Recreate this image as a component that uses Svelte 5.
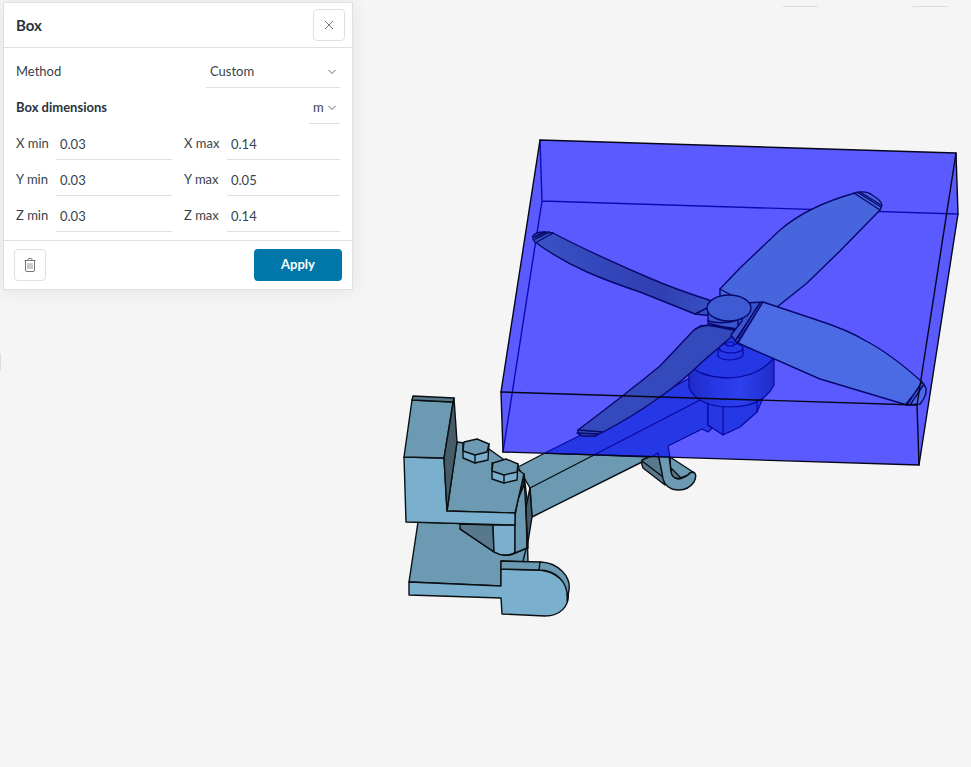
<script lang="ts">
  let method = $state('Custom');
  let unit = $state('m');

  let bounds = $state([
    { axis: 'X', min: '0.03', max: '0.14' },
    { axis: 'Y', min: '0.03', max: '0.05' },
    { axis: 'Z', min: '0.03', max: '0.14' }
  ]);
</script>

{#snippet chevron()}
  <svg class="chevron" viewBox="0 0 8 6" aria-hidden="true">
    <path d="M0.5 1 L4 4.5 L7.5 1" />
  </svg>
{/snippet}

<main class="workspace">
  <svg class="scene" viewBox="0 0 971 767" role="img" aria-label="Propeller model with box selection">
    <defs>
      <linearGradient id="blade-nw" x1="0" y1="0" x2="1" y2="0">
        <stop offset="0" stop-color="#3b52c4" />
        <stop offset="0.3" stop-color="#3449bc" />
        <stop offset="0.7" stop-color="#303fb2" />
        <stop offset="1" stop-color="#3850c4" />
      </linearGradient>
      <linearGradient id="motor" x1="0" y1="0" x2="1" y2="0">
        <stop offset="0" stop-color="#202cc8" />
        <stop offset="0.3" stop-color="#2637e4" />
        <stop offset="0.6" stop-color="#2d40ee" />
        <stop offset="1" stop-color="#1f2cc8" />
      </linearGradient>
    </defs>

    <!-- toolbar and side panel edges -->
    <path class="edge-mark" d="M783 6.5 H818 M913 6.5 H948 M0.5 354 V370" />

    <!-- arm, outside the box -->
    <g class="solid">
      <path class="mid" d="M518 467 L545 453 L652 457 L532 517 L530 488 Z" />
      <path class="line" d="M530 488 L592 456" />
      <path class="shade" d="M642 460 L658 453 L665 485 L643 468 Q641 464 642 460 Z" />
      <path class="line" d="M642 461 L663 477" />
      <path class="mid" d="M670 457 L693 472 L688 475 L678 479 L671 474 Z" />
      <path class="shade" d="M671 468 L681 478 Q673 480 671 473 Z" />
      <path class="mid" d="M658 453 L662 473 Q663 486 672 489 Q686 493 694 482 Q698 474 693 472 Q690 472 688 475 Q683 479 678 479 Q672 478 671 472 L669 456 Z" />
    </g>

    <!-- box volume -->
    <path class="volume" d="M540 140 L956 153 L958 214 L919 465 L503 452 L501 392 Z" />
    <path class="hidden-edge" d="M540 140 L542 201 L958 214 M542 201 L503 452" />

    <!-- arm and motor, inside the box -->
    <g class="tinted">
      <path class="core" d="M545 453 L603 424 L690 378 L708 390 V425 L712 428 L708 432 L702 429 L668 446 L670 457 Z" />
      <path class="line" d="M592 456 L702 399 M651 457 L658 453 L659 457" />
      <path class="core" d="M708 402 V425 L723 435 L740 427 L757 412 L763 398 Z" />
      <path class="line" d="M723 406 V435 M757 412 V402" />
      <path class="motor" d="M689 362 V388 Q699 407 730 407 Q763 407 774 385 V358 Z" />
      <path class="core" d="M689 365 Q702 378 731 378 Q759 376 774 358 L742 342 H722 Z" />
      <path class="core" d="M718 350 V356 Q721 360 731 360 Q741 359 743 355 V349 Z" />
      <ellipse class="core" cx="731" cy="348" rx="12" ry="5" />
      <path class="core" d="M723 342 L727 335 H733 L738 343 Q730 348 723 342 Z" />
      <ellipse class="core" cx="730" cy="344" rx="4" ry="2" />
    </g>

    <!-- propeller blades -->
    <g class="tinted blades">
      <path class="blade-nw" d="M535 242 Q532 239 533 236 Q537 230 553 233 Q587 251 647 277 Q677 290 712 301 L710 306 L713 316 L695 314 L640 292 Q610 282 587 272 Q558 259 535 242 Z" />
      <path class="line" d="M535 239 L549 232 M537 242 L553 233 M534 237 L545 232 M695 314 L709 307" />
      <path class="blade-ne" d="M720 297 V289 L740 268 L780 230 Q808 206 855 193 Q866 190 872 195 Q881 200 882 205 L880 210 L840 251 L807 283 L777 307 L750 310 Z" />
      <path class="line" d="M854 193 L880 210 M857 192 L881 207 M860 192 L881 205 M720 289 L733 296" />
      <path class="blade-sw" d="M578 430 Q622 397 660 366 L693 331 Q698 326 708 325 L738 331 L702 362 Q684 380 660 397 Q632 417 603 432 L595 436 H583 Q577 435 578 430 Z" />
      <path class="line" d="M578 430 L603 432 M577 433 L598 434 M700 326 Q718 324 738 331" />
      <path class="hub-side" d="M708 310 V323 Q720 327 738 329 L750 316 V310 Z" />
      <path class="line" d="M708 321 Q722 325 738 320 V329" />
      <path class="hub-side" d="M745 303 L763 302 L737 343 L731 335 L742 321 Z" />
      <path class="blade-se" d="M763 302 L817 320 Q848 330 866 341 Q891 354 922 382 L926 388 Q927 396 920 404 L907 405 L820 379 L738 343 Z" />
      <path class="line" d="M760 303 L735 341 M757 307 L738 338 M922 382 L907 405 M924 384 L910 405 M918 389 L906 404" />
      <ellipse class="hub" cx="729" cy="308" rx="22" ry="13" />
    </g>

    <!-- box edges -->
    <g class="box-edges">
      <path d="M540 140 L956 153 L958 214 L919 465 L503 452 L501 392 Z" />
      <path d="M501 392 L917 405 L919 465 M917 405 L956 153" />
    </g>

    <!-- clamp -->
    <g class="solid">
      <path class="mid" d="M418 522 L527 526 L528 562 L501 561 V586 L409 582 Z" />
      <path class="shade" d="M460 524 L493 525 L494 552 L460 529 Z" />
      <path class="light" d="M493 525 H515 V553 Q504 558 494 552 Z" />
      <path class="line" d="M460 529 L494 552 Q505 558 515 553 L527 548" />
      <path class="mid" d="M524 474 L515 513 V553 L527 548 L528 508 Z" />
      <path class="dark" d="M524 475 V485 L516 504 L515 516 L519 493 Z" />
      <path class="dark" d="M530 488 L532 517 L527 548 L526 507 Z" />
      <path class="line" d="M524 476 L528 548 M518 497 L524 484 M523 561 L526 549" />

      <path class="mid" d="M457 442 L464 443 L489 449 L524 474 L515 513 L447 511 Z" />
      <path class="light" d="M404 457 L444 458 L447 511 L515 513 V525 L406 522 Z" />
      <path class="mid" d="M412 400 L453 402 L444 458 L404 457 Z" />
      <path class="dark" d="M454 398 L457 442 L447 511 L444 458 Z" />
      <path class="shade" d="M413 396 L454 398 L453 402 L412 400 Z" />

      <path class="light" d="M463 443 V458 L475 463 L488 460 L489 444 Z" />
      <path class="mid" d="M463 451 L464 442 L477 439 L489 444 L487 452 L475 455 Z" />
      <path class="line" d="M475 455 V463" />
      <path class="light" d="M492 463 V479 L504 483 L517 480 L518 464 Z" />
      <path class="mid" d="M492 471 L493 463 L506 459 L518 464 L517 472 L504 475 Z" />
      <path class="line" d="M504 475 V483" />

      <path class="light" d="M409 582 L501 586 V569 L539 570 C577 574 577 616 545 616 L502 614 L501 598 L409 595 Z" />
      <path class="mid" d="M501 561 L541 562 C559 563 571 577 569 590 L567 601 C569 582 556 570 539 570 L501 569 Z" />
      <path class="line" d="M540 562 L539 570" />
    </g>
  </svg>

  <form class="panel" onsubmit={(e) => e.preventDefault()}>
    <header class="panel-header">
      <h2>Box</h2>
      <button class="icon-button" type="button" aria-label="Close">
        <svg class="close-icon" viewBox="0 0 10 10" aria-hidden="true">
          <path d="M1 1 L9 9 M9 1 L1 9" />
        </svg>
      </button>
    </header>

    <div class="panel-body">
      <div class="row">
        <label for="method">Method</label>
        <div class="select method">
          <select id="method" bind:value={method}>
            <option>Custom</option>
          </select>
          {@render chevron()}
        </div>
      </div>

      <div class="row">
        <label class="strong" for="unit">Box dimensions</label>
        <div class="select unit">
          <select id="unit" bind:value={unit}>
            <option>m</option>
          </select>
          {@render chevron()}
        </div>
      </div>

      {#each bounds as bound (bound.axis)}
        <div class="bounds">
          <div class="field">
            <label for="{bound.axis}-min">{bound.axis} min</label>
            <input id="{bound.axis}-min" type="text" bind:value={bound.min} />
          </div>
          <div class="field max">
            <label for="{bound.axis}-max">{bound.axis} max</label>
            <input id="{bound.axis}-max" type="text" bind:value={bound.max} />
          </div>
        </div>
      {/each}
    </div>

    <footer class="panel-footer">
      <button class="icon-button" type="button" aria-label="Delete">
        <svg class="trash-icon" viewBox="0 0 12 14" aria-hidden="true">
          <path d="M0.5 2.5 H11.5 M4 2.5 V1.5 Q4 0.5 5 0.5 H7 Q8 0.5 8 1.5 V2.5 M1.5 2.5 V12 Q1.5 13.5 3 13.5 H9 Q10.5 13.5 10.5 12 V2.5" />
          <path class="slats" d="M4 5 V11 M6 5 V11 M8 5 V11" />
        </svg>
      </button>
      <button class="apply" type="submit">Apply</button>
    </footer>
  </form>
</main>

<style>
  :global(body) {
    margin: 0;
    background: #f5f5f5;
  }

  .workspace {
    display: grid;
    align-items: start;
    min-height: 100vh;
    font-family: Lato, 'Liberation Sans', sans-serif;
    font-size: 13px;
    color: #37434b;
  }

  .scene,
  .panel {
    grid-area: 1 / 1;
  }

  .scene {
    display: block;
    width: 100%;
    height: 100vh;
    stroke-linejoin: round;
    stroke-linecap: round;
  }

  .edge-mark {
    stroke: #dedede;
    fill: none;
  }

  .solid {
    stroke: #0b0f12;
    stroke-width: 1.4;
  }

  .tinted {
    stroke: #0808a0;
    stroke-width: 1.2;
  }

  .blades {
    stroke: #08086c;
    stroke-width: 1.4;
  }

  .line {
    fill: none;
  }

  .light {
    fill: #7aafcd;
  }

  .mid {
    fill: #6b9ab2;
  }

  .shade {
    fill: #58798b;
  }

  .dark {
    fill: #465c69;
  }

  .volume {
    fill: #5a5aff;
  }

  .hidden-edge {
    fill: none;
    stroke: #0b0bb4;
    stroke-width: 1.4;
  }

  .box-edges {
    fill: none;
    stroke: #05051a;
    stroke-width: 1.4;
  }

  .core {
    fill: #2637e6;
  }

  .motor {
    fill: url(#motor);
  }

  .blade-nw {
    fill: url(#blade-nw);
  }

  .blade-ne {
    fill: #4765dd;
  }

  .blade-se {
    fill: #4b6be5;
  }

  .blade-sw {
    fill: #344abc;
  }

  .hub {
    fill: #3f5bd3;
  }

  .hub-side {
    fill: #3a54cf;
  }

  .panel {
    box-sizing: border-box;
    width: 350px;
    max-width: calc(100vw - 6px);
    margin: 2px 3px;
    background: #fff;
    border: 1px solid #e0e0e0;
    box-shadow: 0 1px 16px rgb(0 0 0 / 8%);
  }

  .panel-header,
  .panel-footer {
    display: flex;
    align-items: center;
    justify-content: space-between;
  }

  .panel-header {
    height: 44px;
    padding: 0 7px 0 12px;
    border-bottom: 1px solid #e0e0e0;
  }

  .panel-footer {
    height: 48px;
    padding: 0 10px;
    border-top: 1px solid #e0e0e0;
  }

  h2 {
    margin: 0;
    font-size: 15px;
    font-weight: 700;
    color: #27343d;
  }

  .panel-body {
    padding: 4px 12px 8px;
  }

  .row {
    display: flex;
    align-items: center;
    justify-content: space-between;
    height: 36px;
  }

  label {
    padding-top: 2px;
    white-space: nowrap;
  }

  .strong {
    font-weight: 700;
    color: #27343d;
  }

  .select {
    display: grid;
    align-items: center;
    box-sizing: border-box;
    height: 36px;
    border-bottom: 1px solid #e0e0e0;
  }

  .method {
    width: 134px;
  }

  .unit {
    width: 31px;
  }

  select,
  .chevron {
    grid-area: 1 / 1;
  }

  select {
    appearance: none;
    width: 100%;
    height: 34px;
    padding: 3px 4px 0;
    border: 0;
    background: transparent;
    color: inherit;
    font: inherit;
  }

  .chevron {
    justify-self: end;
    width: 8px;
    height: 6px;
    margin: 4px 4px 0 0;
    fill: none;
    stroke: #666;
    pointer-events: none;
  }

  .bounds {
    display: grid;
    grid-template-columns: 1fr 1fr;
    gap: 12px;
    height: 36px;
  }

  .field {
    display: grid;
    grid-template-columns: 40px 1fr;
    align-items: center;
  }

  .field.max {
    grid-template-columns: 43px 1fr;
  }

  input {
    box-sizing: border-box;
    width: 100%;
    height: 36px;
    padding: 5px 4px 0;
    border: 0;
    border-bottom: 1px solid #e0e0e0;
    border-radius: 0;
    background: transparent;
    color: inherit;
    font: inherit;
  }

  button {
    font: inherit;
    cursor: pointer;
  }

  .icon-button {
    display: grid;
    place-items: center;
    width: 32px;
    height: 32px;
    padding: 0;
    border: 1px solid #e0e0e0;
    border-radius: 4px;
    background: #fff;
  }

  .close-icon,
  .trash-icon {
    fill: none;
    stroke: #777;
  }

  .slats {
    stroke: #999;
  }

  .close-icon {
    width: 10px;
    height: 10px;
  }

  .trash-icon {
    width: 12px;
    height: 14px;
  }

  .apply {
    width: 88px;
    height: 32px;
    padding: 0 0 2px;
    border: 0;
    border-radius: 4px;
    background: #0077a8;
    color: #fff;
    font-weight: 700;
  }
</style>
